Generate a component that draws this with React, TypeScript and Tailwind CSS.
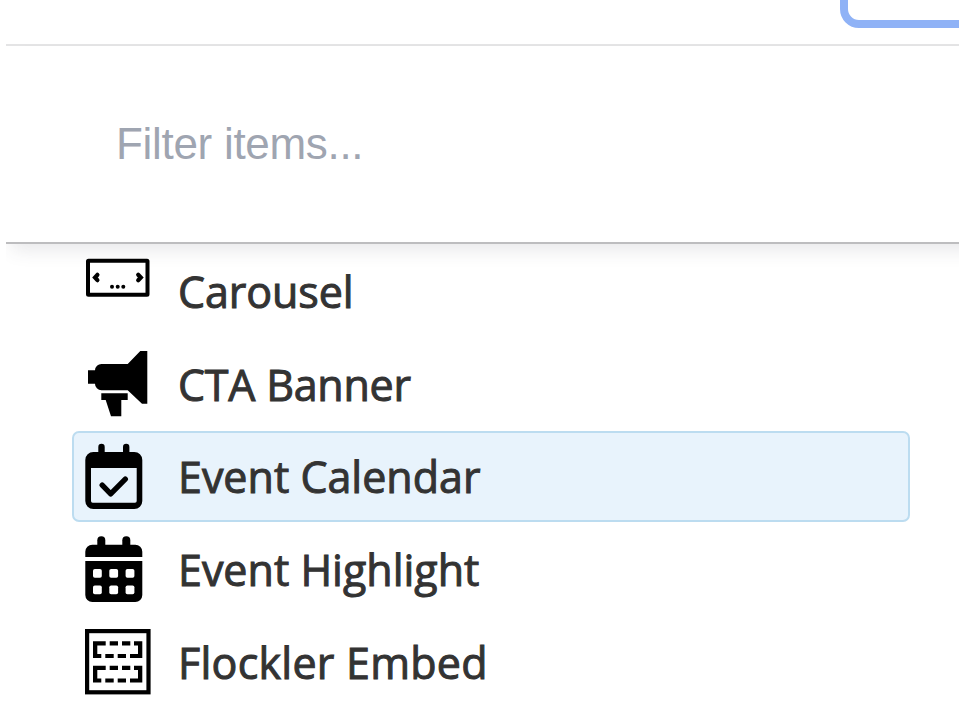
import React, { useState } from 'react';

interface IconProps {
  children: React.ReactNode;
}

const Icon: React.FC<IconProps> = ({ children }) => (
  <svg viewBox="0 0 68 92" width={68} height={92} fill="#000" className="shrink-0" aria-hidden="true">
    {children}
  </svg>
);

const CarouselIcon = () => (
  <Icon>
    <rect x="3" y="14.7" width="59.5" height="34.1" rx="0.5" fill="#fff" stroke="#000" strokeWidth="4" />
    <path d="M12.4 28.8 10 31.5l2.4 2.7M53.2 28.8l2.6 2.7-2.6 2.7" fill="none" stroke="#000" strokeWidth="4.2" strokeLinecap="round" />
    <circle cx="27" cy="40.7" r="2" />
    <circle cx="32.7" cy="40.7" r="2" />
    <circle cx="38.3" cy="40.7" r="2" />
  </Icon>
);

const MegaphoneIcon = () => (
  <Icon>
    <path d="M3 32.3h7a6.5 6.5 0 0 1 6.5-6.3h26.2L55.3 13h7v52.7H57L42.7 52.3H16.5A6.5 6.5 0 0 1 10 45.7H3z" />
    <path d="M16.3 55.3h26.4V62h-6.4v16.3H26L20.7 62h-4.4z" />
  </Icon>
);

const CalendarCheckIcon = () => (
  <Icon>
    <path fillRule="evenodd" d="M8.3 21h41a8 8 0 0 1 8 8v41a8 8 0 0 1-8 8h-41a8 8 0 0 1-8-8V29a8 8 0 0 1 8-8zM6 37v33a1.7 1.7 0 0 0 1.7 1.7H50a1.7 1.7 0 0 0 1.7-1.7V37z" />
    <rect x="13.3" y="12.7" width="6.4" height="14" rx="3.2" />
    <rect x="38" y="12.7" width="6.4" height="14" rx="3.2" />
    <path d="m17.2 54.2 8.5 8.6 14.6-14.6" fill="none" stroke="#000" strokeWidth="5.4" strokeLinecap="round" strokeLinejoin="round" />
  </Icon>
);

const CalendarGridIcon = () => (
  <Icon>
    <rect x="12.3" y="12.3" width="8" height="14" rx="4" />
    <rect x="37.3" y="12.3" width="8" height="14" rx="4" />
    <path d="M.3 33v-5.3a7 7 0 0 1 7-7h43a7 7 0 0 1 7 7V33zM.3 37h57v34a7 7 0 0 1-7 7h-43a7 7 0 0 1-7-7z" />
    {[45, 61.4].map((y) =>
      [8, 24.3, 40.6].map((x) => (
        <rect key={`${x}-${y}`} x={x} y={y} width="8.8" height="8.8" rx="1.8" fill="#fff" />
      ))
    )}
  </Icon>
);

const EmbedIcon = () => (
  <Icon>
    <rect x="2.1" y="15.1" width="61.4" height="61.2" fill="none" stroke="#000" strokeWidth="4.2" />
    {[25.3, 49.8].map((y) => (
      <g key={y} transform={`translate(0 ${y})`}>
        <path d="M8 0h12.7v4.2h-8.4v8.4h4v4.2H8z" />
        <path d="M57.3 16.8H45v-4.2h8V4.2h-4V0h8.3z" />
        <path d="M24.7 0H33v4.2h-8.3zM37 0h8.3v4.2H37zM20.3 12.6h8.4v4.2h-8.4zM32.7 12.6H41v4.2h-8.3z" />
      </g>
    ))}
  </Icon>
);

const items = [
  { name: 'Carousel', icon: CarouselIcon, tracking: 'tracking-[-0.1px]' },
  { name: 'CTA Banner', icon: MegaphoneIcon, tracking: 'tracking-[-0.25px]' },
  { name: 'Event Calendar', icon: CalendarCheckIcon, tracking: 'tracking-[0px]' },
  { name: 'Event Highlight', icon: CalendarGridIcon, tracking: 'tracking-[0px]' },
  { name: 'Flockler Embed', icon: EmbedIcon, tracking: 'tracking-[0.25px]' },
];

const App: React.FC = () => {
  const [filter, setFilter] = useState('');
  const [selected, setSelected] = useState('Event Calendar');

  const visible = items.filter((item) => item.name.toLowerCase().includes(filter.toLowerCase()));

  return (
    <div className="h-[720px] w-[960px] overflow-hidden bg-white pr-px pl-1.5">
      <div className="flex h-full flex-col overflow-hidden">
        <header className="flex h-[46px] shrink-0 items-start justify-end overflow-hidden border-b-2 border-[#e4e4e5]">
          <button className="-mt-10 -mr-10 h-[68px] w-[159px] shrink-0 rounded-[19px] border-8 border-[#8fb2f6] bg-white" aria-label="Add" />
        </header>

        <div className="-mr-8 flex h-[198px] shrink-0 items-center border-b-2 border-[#bdbdbf] bg-white pr-12 pl-[110px] shadow-[0_11px_18px_-6px_rgba(60,60,80,0.13)]">
          <input
            value={filter}
            onChange={(e) => setFilter(e.target.value)}
            placeholder="Filter items..."
            className="w-full font-['Liberation_Sans',Arial,sans-serif] text-[44px] leading-none tracking-[-0.3px] text-[#333] outline-none placeholder:text-[#9fa5b1]"
          />
        </div>

        <ul className="flex flex-col gap-[1.65px] pt-[2.2px] pr-[49px] pl-[65.5px]">
          {visible.map(({ name, icon: ItemIcon, tracking }) => (
            <li
              key={name}
              onClick={() => setSelected(name)}
              className={`flex h-[91px] shrink-0 cursor-pointer items-center gap-[25px] rounded-[7px] border-2 pl-[11.5px] ${
                name === selected ? 'border-[#bcdcf0] bg-[#e8f3fc]' : 'border-transparent'
              }`}
            >
              <ItemIcon />
              <span className={`font-['Open_Sans',sans-serif] text-[43px] leading-none whitespace-nowrap text-[#333] [-webkit-text-stroke:1px_#333] ${tracking}`}>
                {name}
              </span>
            </li>
          ))}
        </ul>
      </div>
    </div>
  );
};

export default App;
